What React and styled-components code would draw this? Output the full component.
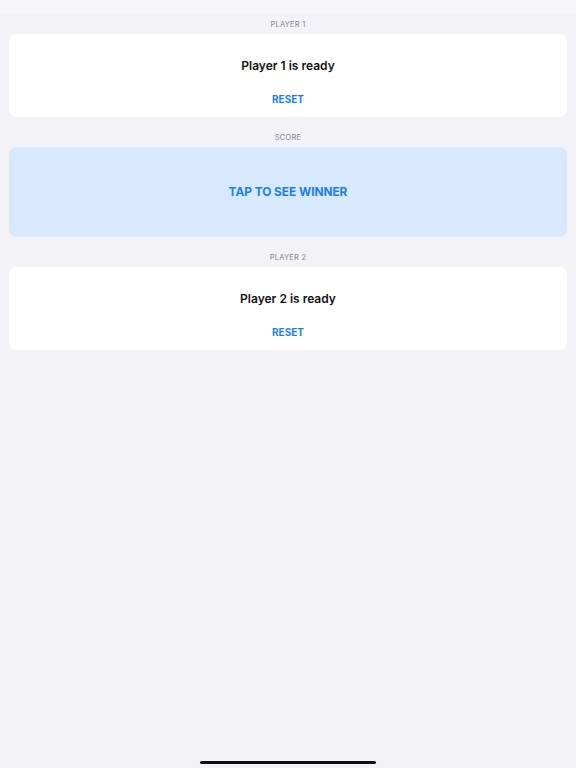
import React from 'react';
import styled, { createGlobalStyle } from 'styled-components';

const colors = {
  page: '#f2f2f7',
  statusBar: '#f6f6f9',
  card: '#ffffff',
  score: '#d8e9fd',
  label: '#86868b',
  text: '#111111',
  blue: '#1a7fe8'
};

const GlobalStyle = createGlobalStyle`
  html, body {
    margin: 0;
    padding: 0;
    background: ${colors.page};
  }

  body {
    font-family: Inter, "Noto Sans", sans-serif;
    -webkit-font-smoothing: antialiased;
  }
`;

const Screen = styled.div`
  position: relative;
  display: flex;
  flex-direction: column;
  width: 576px;
  height: 768px;
  background: ${colors.page};
  overflow: hidden;
`;

const StatusBar = styled.div`
  height: 13px;
  background: ${colors.statusBar};
`;

const Content = styled.div`
  display: flex;
  flex-direction: column;
  padding: 0 9px;
`;

const SectionLabel = styled.div`
  height: 21px;
  padding-top: 2px;
  box-sizing: border-box;
  display: flex;
  align-items: center;
  justify-content: center;
  font-size: 7.5px;
  letter-spacing: 0.2px;
  text-transform: uppercase;
  color: ${colors.label};
`;

const Card = styled.div`
  display: flex;
  flex-direction: column;
  align-items: center;
  height: ${({ $height }) => $height}px;
  border-radius: 7px;
  background: ${({ $tint }) => ($tint ? colors.score : colors.card)};
  margin-bottom: ${({ $gap }) => $gap}px;
`;

const PlayerStatus = styled.div`
  margin-top: 24px;
  font-size: 12px;
  font-weight: 600;
  color: ${colors.text};
`;

const ResetButton = styled.button`
  margin-top: 20px;
  padding: 0;
  border: 0;
  background: none;
  font-family: inherit;
  font-size: 10px;
  font-weight: 700;
  color: ${colors.blue};
  cursor: pointer;
`;

const WinnerButton = styled.button`
  flex: 1;
  width: 100%;
  padding: 0;
  border: 0;
  background: none;
  font-family: inherit;
  font-size: 11.8px;
  font-weight: 700;
  color: ${colors.blue};
  cursor: pointer;
`;

const HomeIndicator = styled.div`
  position: absolute;
  left: 200px;
  bottom: 4px;
  width: 176px;
  height: 3px;
  border-radius: 2px;
  background: #111;
`;

const PlayerCard = ({ name }) => (
  <Card $height={83} $gap={9}>
    <PlayerStatus>{name} is ready</PlayerStatus>
    <ResetButton>RESET</ResetButton>
  </Card>
);

const App = () => (
  <Screen>
    <GlobalStyle />
    <StatusBar />
    <Content>
      <SectionLabel>Player 1</SectionLabel>
      <PlayerCard name="Player 1" />
      <SectionLabel>Score</SectionLabel>
      <Card $tint $height={90} $gap={9}>
        <WinnerButton>TAP TO SEE WINNER</WinnerButton>
      </Card>
      <SectionLabel>Player 2</SectionLabel>
      <PlayerCard name="Player 2" />
    </Content>
    <HomeIndicator />
  </Screen>
);

export default App;
